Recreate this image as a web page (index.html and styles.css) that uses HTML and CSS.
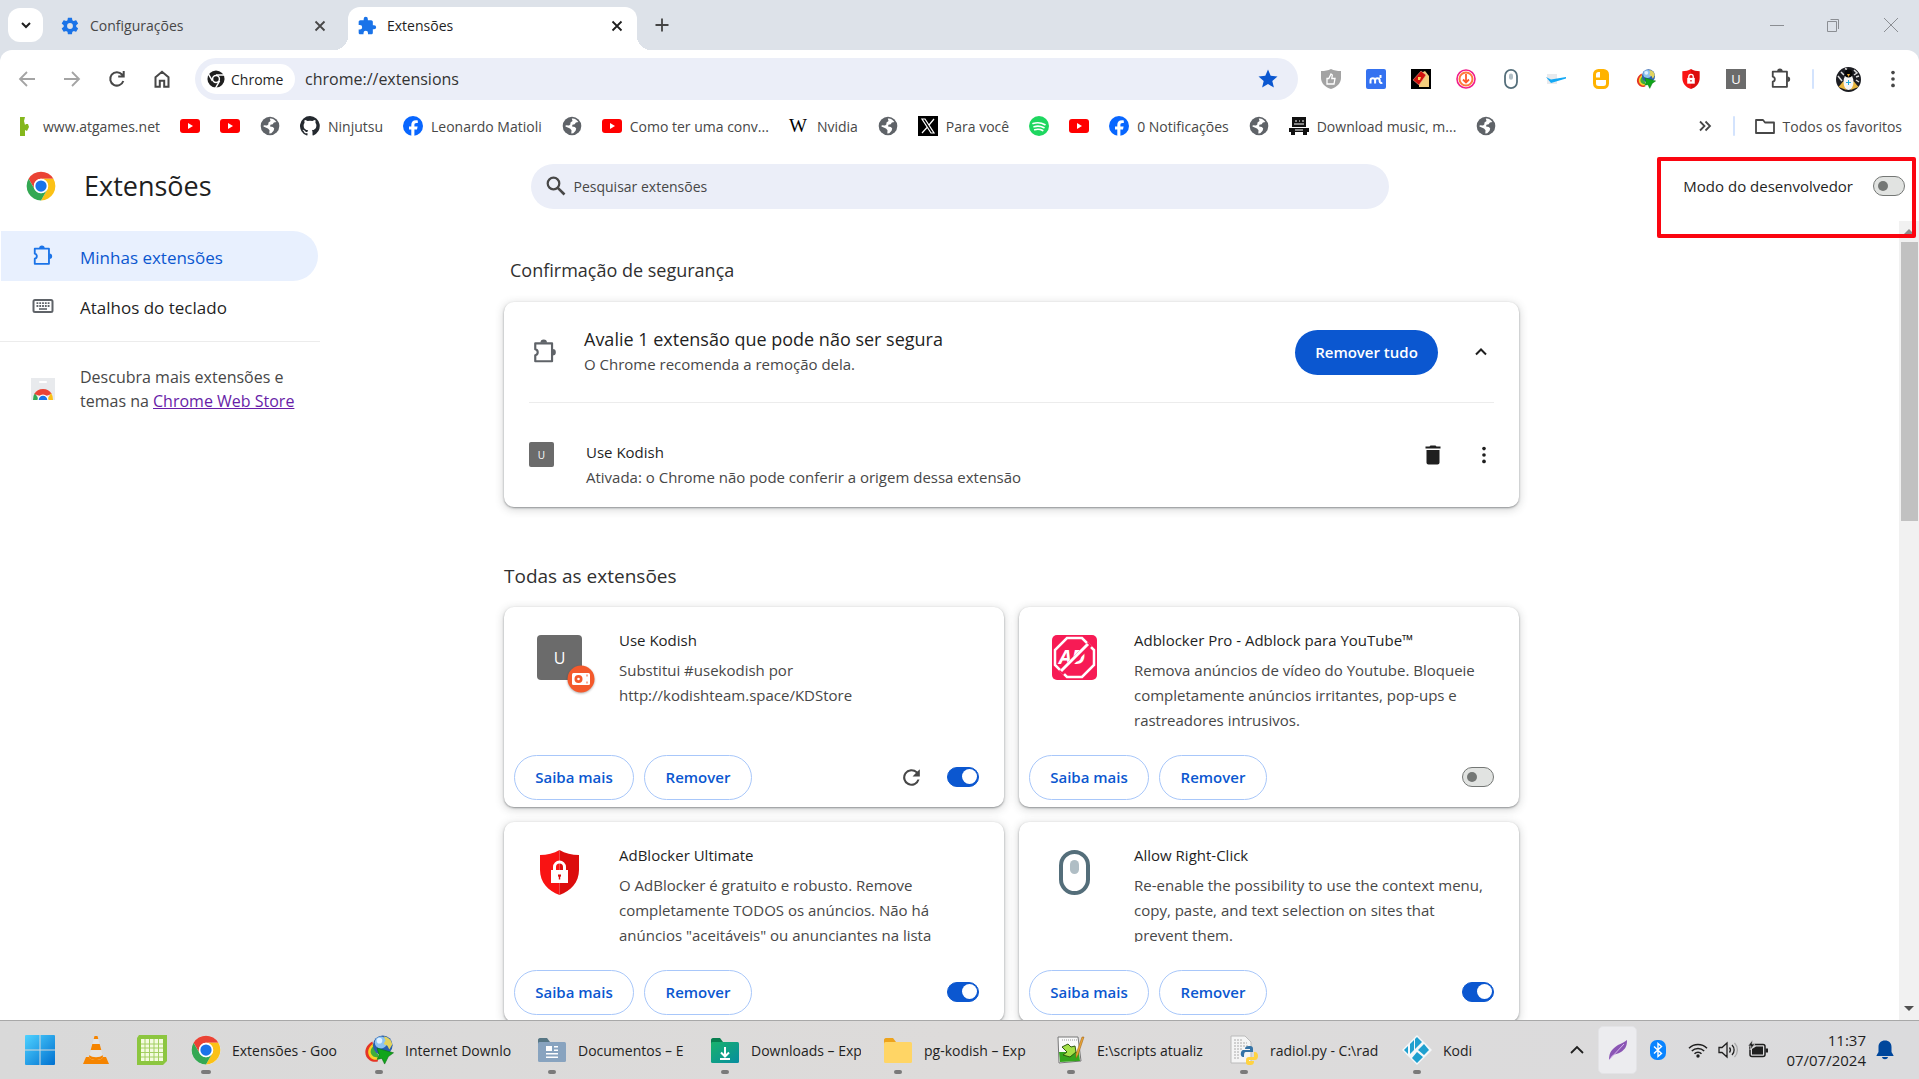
FILE: index.html
```html
<!DOCTYPE html>
<html lang="pt-BR">
<head>
<meta charset="utf-8">
<meta name="viewport" content="width=device-width, initial-scale=1">
<title>Extensões</title>
<link rel="stylesheet" href="styles.css">
</head>
<body>
<svg class="sprite" aria-hidden="true">
  <symbol id="close" viewBox="0 0 16 16"><path d="M3.500 3.500l9 9M12.500 3.500l-9 9" fill="none" stroke="currentColor" stroke-width="1.800"/></symbol>
  <symbol id="puzzle" viewBox="0 0 24 24"><path fill="currentColor" d="M20.500 11H19V7c0-1.100-.9-2-2-2h-4V3.500a2.500 2.500 0 0 0-5 0V5H4c-1.100 0-2 .9-2 2v3.800h1.500a2.700 2.700 0 0 1 0 5.400H2V20c0 1.100.9 2 2 2h3.800v-1.500a2.700 2.700 0 0 1 5.400 0V22H17c1.100 0 2-.9 2-2v-4h1.500a2.500 2.500 0 0 0 0-5z"/></symbol>
  <symbol id="puzzle-line" viewBox="0 0 24 24"><path d="M3 4h15.500v16.500H3v-5.500a2.800 2.800 0 0 0 0-5.500z" fill="none" stroke="currentColor" stroke-width="2" stroke-linejoin="round"/><path fill="currentColor" d="M7.800 3.500a3 3 0 0 1 6 0zM19 9.200a3 3 0 0 1 0 6z"/></symbol>
  <symbol id="globe" viewBox="0 0 20 20"><circle cx="10" cy="10" r="9.300" fill="#5f6368"/><path fill="#fff" d="M9.800 2.600c2.700-.4 5.200 1.200 6.600 3.500l-2.500.5-1.200 1.700-2.300.4-.3 1.800 2.800.4 1.300 1.500-.6 2.300-2.300 2.600-2 .2.200-3.300-1.500-1.700-4.600-2 .4-1.300 3.200.2 1.300-1 .2-2 2-1.400z"/></symbol>
  <symbol id="youtube" viewBox="0 0 20 20"><rect y="3" width="20" height="14" rx="3" fill="#f00"/><path d="M8 7v6l5-3z" fill="#fff"/></symbol>
  <symbol id="facebook" viewBox="0 0 20 20"><circle cx="10" cy="10" r="10" fill="#0866ff"/><path fill="#fff" d="M8.300 20v-6.500H6v-3h2.300V9c0-3.300 1.500-4.800 4.700-4.800.6 0 1.300.1 1.800.2v2.700c-.4 0-.8-.1-1.300-.1-1.600 0-2.100.7-2.100 2v1.500h3.200l-.6 3h-2.600V20z"/></symbol>
  <symbol id="chrome" viewBox="0 0 48 48"><circle cx="24" cy="24" r="23" fill="#fff"/><path fill="#ea4335" d="M4.100 12.500A23 23 0 0 1 43.900 12.500H24a11.500 11.500 0 0 0-10 17.200z"/><path fill="#fbc116" d="M43.900 12.500A23 23 0 0 1 24 47l10-17.300a11.500 11.500 0 0 0-10-17.200z"/><path fill="#34a853" d="M24 47A23 23 0 0 1 4.100 12.500l9.900 17.200a11.500 11.500 0 0 0 20 0z"/><circle cx="24" cy="24" r="11.500" fill="#fff"/><circle cx="24" cy="24" r="9" fill="#1a73e8"/></symbol>
  <symbol id="refresh" viewBox="0 0 24 24"><path fill="currentColor" d="M17.650 6.350A8 8 0 1 0 19.730 14h-2.080A6 6 0 1 1 12 6c1.660 0 3.140.69 4.220 1.780L13 11h7V4z"/></symbol>
  <symbol id="dots" viewBox="0 0 24 24"><g fill="currentColor"><circle cx="12" cy="5" r="2"/><circle cx="12" cy="12" r="2"/><circle cx="12" cy="19" r="2"/></g></symbol>
  <symbol id="shield" viewBox="0 0 45 45"><path fill="#f91313" d="M22.500 0C17 3.500 10 5 3 5v15c0 12 8 21 19.500 25z"/><path fill="#dc0d0d" d="M22.500 0C28 3.500 35 5 42 5v15c0 12-8 21-19.500 25z"/><path fill="#fff" d="M14 20h17v13H14z"/><path d="M17.500 20v-3a5 5 0 0 1 10 0v3" fill="none" stroke="#fff" stroke-width="3"/><path fill="#dc0d0d" d="M21 24.500h3v1.800l-.8.700v2.500h-1.400V27l-.8-.7z"/></symbol>
  <symbol id="mouse" viewBox="0 0 45 45"><rect x="9" y="2" width="27" height="41" rx="13.500" fill="#fff" stroke="#546e7a" stroke-width="4"/><rect x="18" y="10" width="9" height="14" rx="4.500" fill="#b0bec5"/></symbol>
  <symbol id="idm" viewBox="0 0 32 32"><path fill="#e53525" d="M9 7C0 12-1 22 6 27c3 2 7 2 9 1l-1-4C8 24 6 17 10 12z"/><path fill="#f5d327" d="M10 9C3 14 3 21 8 25c2 1.500 5 1.500 7 1l-1-4c-4-1-5-5-2-9z"/><path fill="#3fae3a" d="M11 11c-5 4-5 9-1 12 2 1 4 1 5 .5L15 20c-3-1-3-4-1-7z"/><circle cx="20" cy="11" r="10.500" fill="#2a5fae"/><circle cx="18" cy="8" r="6.500" fill="#8dc3f0"/><circle cx="16.500" cy="6" r="3" fill="#dff0ff"/><path fill="#e2d35d" d="M21 1.500c5 .5 9 4 9 9l-3 5-2-4-4-2 2-4z"/><path fill="#10a51a" stroke="#0a6c12" stroke-width=".6" d="M14 14l17.500 5-5.500 4-4 8-3-6-5 1 2-5z"/></symbol>
</svg>

<header class="browser">
  <div class="tabstrip">
    <button class="tab-search" aria-label="Pesquisar guias"><svg width="12" height="12" viewBox="0 0 12 12"><path d="M2 4l4 4 4-4" fill="none" stroke="#1f1f1f" stroke-width="2"/></svg></button>
    <div class="tab">
      <svg class="i20 blue" viewBox="0 0 24 24"><path fill="currentColor" fill-rule="evenodd" d="M19.400 13l.1-1-.1-1 2.100-1.600c.2-.2.200-.4.100-.6l-2-3.500c-.1-.2-.4-.3-.6-.2l-2.500 1c-.5-.4-1.100-.7-1.700-1L14.400 2.500c0-.3-.2-.5-.5-.5h-4c-.2 0-.4.2-.5.500L9 5.100c-.6.300-1.200.6-1.700 1l-2.500-1c-.2-.1-.5 0-.6.200l-2 3.500c-.1.200-.1.500.1.600L4.500 11l-.1 1 .1 1-2.200 1.600c-.2.200-.2.400-.1.600l2 3.500c.1.200.4.300.6.200l2.500-1c.5.400 1.100.7 1.700 1l.4 2.600c.1.300.3.500.5.500h4c.3 0 .5-.2.500-.5l.4-2.600c.6-.3 1.200-.6 1.700-1l2.500 1c.2.100.5 0 .6-.2l2-3.500c.1-.2.100-.5-.1-.6zM12 15.500a3.500 3.500 0 1 1 0-7 3.500 3.500 0 0 1 0 7z"/></svg>
      <span class="tab-title">Configurações</span>
      <button class="icon-btn" aria-label="Fechar Configurações"><svg class="i16"><use href="#close"/></svg></button>
    </div>
    <div class="tab active">
      <svg class="i20 blue"><use href="#puzzle"/></svg>
      <span class="tab-title">Extensões</span>
      <button class="icon-btn" aria-label="Fechar Extensões"><svg class="i16"><use href="#close"/></svg></button>
    </div>
    <button class="icon-btn new-tab" aria-label="Nova guia"><svg class="i16" viewBox="0 0 16 16"><path d="M8 1.500v13M1.500 8h13" stroke="#444" stroke-width="1.800"/></svg></button>
    <div class="window-controls">
      <button class="icon-btn" aria-label="Minimizar"><svg class="i16" viewBox="0 0 16 16"><path d="M1 8.500h14" stroke="currentColor"/></svg></button>
      <button class="icon-btn" aria-label="Restaurar"><svg class="i16" viewBox="0 0 16 16"><path d="M1.500 4.500h9v10h-9zM4.500 2.500h8v9.500" fill="none" stroke="currentColor"/></svg></button>
      <button class="icon-btn" aria-label="Fechar"><svg class="i16" viewBox="0 0 16 16"><path d="M1 1l14 14M15 1L1 15" stroke="currentColor"/></svg></button>
    </div>
  </div>

  <div class="toolbar">
    <div class="nav-buttons">
      <button class="icon-btn dim" aria-label="Voltar"><svg class="i20" viewBox="0 0 20 20"><path d="M18 10H3M10 3l-7 7 7 7" fill="none" stroke="currentColor" stroke-width="1.800"/></svg></button>
      <button class="icon-btn dim" aria-label="Avançar"><svg class="i20" viewBox="0 0 20 20"><path d="M2 10h15M10 3l7 7-7 7" fill="none" stroke="currentColor" stroke-width="1.800"/></svg></button>
      <button class="icon-btn" aria-label="Recarregar"><svg class="i20" viewBox="0 0 20 20"><path d="M16.300 12A6.700 6.700 0 1 1 15 5.500l1.500 1.700M16.700 2v5.500h-5.500" fill="none" stroke="currentColor" stroke-width="2"/></svg></button>
      <button class="icon-btn" aria-label="Página inicial"><svg class="i20" viewBox="0 0 20 20"><path d="M3.500 8.200L10 2.800l6.500 5.400v9.600h-4.300v-6H7.800v6H3.500z" fill="none" stroke="currentColor" stroke-width="2"/></svg></button>
    </div>
    <div class="omnibox">
      <span class="chip"><svg class="i18" viewBox="0 0 20 20"><circle cx="10" cy="10" r="9.500" fill="#1f1f1f"/><g stroke="#fff" stroke-width="1.600"><path d="M10 5.500h9M6 12L1.500 4.300M14 12.200L9.500 20"/></g><circle cx="10" cy="10" r="4.600" fill="#fff"/><circle cx="10" cy="10" r="3" fill="#1f1f1f"/></svg>Chrome</span>
      <input class="url" type="text" value="chrome://extensions" aria-label="Barra de endereço">
      <button class="icon-btn" aria-label="Favorito"><svg class="i20" viewBox="0 0 20 20"><path fill="#0b57d0" d="M10 .5l2.700 6.300 6.800.6-5.200 4.500 1.600 6.700L10 15l-5.900 3.600 1.600-6.700L.5 7.400l6.800-.6z"/></svg></button>
    </div>
    <div class="ext-icons">
      <svg class="i20" viewBox="0 0 20 20"><path fill="#a3a3a3" d="M10 0c3 1.500 6 2 10 2v7c0 5-4 9-10 11C4 18 0 14 0 9V2c4 0 7-.5 10-2z"/><path fill="none" stroke="#fff" stroke-width="1.300" d="M6 15V9.500h1.800L10 5l1.300 1-.5 3.500H14l-1 5.500z"/></svg>
      <svg class="i20" viewBox="0 0 20 20"><rect width="20" height="20" rx="2" fill="#3572f0"/><path d="M4.500 14.500v-3a2.300 2.300 0 0 1 4.600 0v3M9.100 11.500a2.300 2.300 0 0 1 4.600 0v1a1.500 1.500 0 0 0 2.500 1M14.500 6v3" fill="none" stroke="#fff" stroke-width="2"/></svg>
      <svg class="i20" viewBox="0 0 20 20"><path d="M0 0h20v20H0z"/><path fill="#f3cd7d" d="M8 5l6-3 4 5v11H8z"/><path fill="#d2110c" stroke="#f4b4a0" stroke-width=".5" d="M10 2l5 4-7 10-6-5z"/><path fill="#ffd35a" d="M7 8h3l-1 3H7z"/></svg>
      <svg class="i20" viewBox="0 0 20 20"><circle cx="10" cy="10" r="9" fill="none" stroke="#f11f8c" stroke-width="1.600"/><circle cx="10" cy="10" r="6.500" fill="none" stroke="#ff7a3c" stroke-width="2"/><path d="M10 5v8M7 10.500l3 3 3-3" fill="none" stroke="#ff5a2c" stroke-width="1.800"/></svg>
      <svg class="i20"><use href="#mouse"/></svg>
      <svg class="i20" viewBox="0 0 20 20"><path fill="#e8eaed" d="M1 5h10v10H1z"/><path fill="#14a9f5" d="M0 8l5 2.500L20 8v1.500L5 14z"/></svg>
      <svg class="i20" viewBox="0 0 20 20"><rect x="3.500" y="1.500" width="13" height="17" rx="4" fill="#fff" stroke="#ffb300" stroke-width="3"/><path fill="#ffb300" d="M9 2h7v8h-7zM3 8.500h14V11H3z"/></svg>
      <svg class="i20"><use href="#idm"/></svg>
      <svg class="i20"><use href="#shield"/></svg>
      <span class="letter-icon">U</span>
      <button class="icon-btn" aria-label="Extensões"><svg class="i22"><use href="#puzzle-line"/></svg></button>
      <span class="divider"></span>
      <svg class="i25" viewBox="0 0 25 25"><circle cx="12.500" cy="12.500" r="12.500" fill="#1c1d22"/><path d="M2 9l4 5M5 5l3 3M18 3l3 3-3 2M20 10l3-1M9 1.500l2 1M20 13l3 2" stroke="#ddd" stroke-width="1.500" fill="none"/><path fill="#e7b53c" d="M2.500 20l5-6 3 9zM22.500 20l-5-6-3 9z"/><ellipse cx="12.500" cy="15" rx="5" ry="8" fill="#f6f6f6"/><circle cx="12.500" cy="6.500" r="4" fill="#060606"/><path fill="#f2a92b" d="M11 7h3l-1.500 3z"/><path d="M12.500 13v5M10 15.500h5" stroke="#2bb0dd"/></svg>
      <button class="icon-btn" aria-label="Menu"><svg class="i22"><use href="#dots"/></svg></button>
    </div>
  </div>

  <nav class="bookmarks" aria-label="Favoritos">
    <a href="#"><svg class="i20" viewBox="0 0 20 20"><path fill="#84b71c" d="M5 1h5l-1 4 1 4 1-1h2l1 3-2 4-2-1v6H5z"/></svg>www.atgames.net</a>
    <a href="#" aria-label="YouTube"><svg class="i20"><use href="#youtube"/></svg></a>
    <a href="#" aria-label="YouTube"><svg class="i20"><use href="#youtube"/></svg></a>
    <a href="#" aria-label="Site"><svg class="i20"><use href="#globe"/></svg></a>
    <a href="#"><svg class="i20" viewBox="0 0 16 16"><path fill="#24292f" d="M8 0a8 8 0 0 0-2.500 15.600c.4.100.5-.2.500-.4v-1.500c-2.200.5-2.700-1-2.700-1-.4-.9-.9-1.200-.9-1.200-.7-.5.100-.5.100-.5.800.1 1.200.8 1.200.8.700 1.300 1.900.9 2.300.7.100-.5.300-.9.500-1.100-1.800-.2-3.600-.9-3.600-4 0-.9.300-1.600.8-2.100-.1-.2-.4-1 .1-2.100 0 0 .7-.2 2.200.8a7.600 7.600 0 0 1 4 0c1.500-1 2.200-.8 2.200-.8.400 1.100.2 1.900.1 2.100.5.600.8 1.300.8 2.100 0 3.100-1.900 3.800-3.600 4 .3.200.5.700.5 1.500v2.200c0 .2.100.5.600.4A8 8 0 0 0 8 0z"/></svg>Ninjutsu</a>
    <a href="#"><svg class="i20"><use href="#facebook"/></svg>Leonardo Matioli</a>
    <a href="#" aria-label="Site"><svg class="i20"><use href="#globe"/></svg></a>
    <a href="#"><svg class="i20"><use href="#youtube"/></svg>Como ter uma conv...</a>
    <a href="#"><span class="wiki">W</span>Nvidia</a>
    <a href="#" aria-label="Site"><svg class="i20"><use href="#globe"/></svg></a>
    <a href="#"><svg class="i20" viewBox="0 0 20 20"><path d="M0 0h20v20H0z"/><path d="M4 3h3l9 14h-3zM16 3L11 9M9 11.500L4 17" fill="none" stroke="#fff" stroke-width="1.200"/></svg>Para você</a>
    <a href="#" aria-label="Spotify"><svg class="i20" viewBox="0 0 20 20"><circle cx="10" cy="10" r="10" fill="#1ed760"/><path d="M4 7.500c4-1.200 8.500-.8 12 1.200M5 10.700c3.500-1 7-.6 10 1M5.700 13.700c2.800-.8 5.700-.5 8 .9" fill="none" stroke="#fff" stroke-width="1.700" stroke-linecap="round"/></svg></a>
    <a href="#" aria-label="YouTube"><svg class="i20"><use href="#youtube"/></svg></a>
    <a href="#"><svg class="i20"><use href="#facebook"/></svg>0 Notificações</a>
    <a href="#" aria-label="Site"><svg class="i20"><use href="#globe"/></svg></a>
    <a href="#"><svg class="i20" viewBox="0 0 20 20"><path d="M3 1h14v10H3zM0 12h20v4H0zM2 16h4v3H2zM14 16h4v3h-4z" fill="#111"/><path d="M6 5h2M10 5h1M13 5h2M5 8h10M6 14h8" stroke="#fff"/></svg>Download music, m...</a>
    <a href="#" aria-label="Site"><svg class="i20"><use href="#globe"/></svg></a>
    <span class="spacer"></span>
    <button class="icon-btn" aria-label="Mais favoritos"><svg class="i16" viewBox="0 0 16 16"><path d="M3 3.500L7.500 8 3 12.500M8.500 3.500L13 8l-4.500 4.500" fill="none" stroke="currentColor" stroke-width="1.800"/></svg></button>
    <span class="divider"></span>
    <a class="all" href="#"><svg class="i20" viewBox="0 0 20 20"><path d="M1 4h7l2 2.500h9V17H1z" fill="none" stroke="#474747" stroke-width="1.800" stroke-linejoin="round"/></svg>Todos os favoritos</a>
  </nav>
</header>

<div class="page">
  <header class="page-header">
    <div class="brand"><svg class="i30"><use href="#chrome"/></svg><h1>Extensões</h1></div>
    <label class="search">
      <svg class="i20" viewBox="0 0 20 20"><circle cx="7.500" cy="7.500" r="5.800" fill="none" stroke="#474747" stroke-width="2.200"/><path d="M11.800 11.800l6.700 6.700" stroke="#474747" stroke-width="2.600"/></svg>
      <input type="text" placeholder="Pesquisar extensões" aria-label="Pesquisar extensões">
    </label>
    <div class="dev-mode">
      <label for="dev">Modo do desenvolvedor</label>
      <input class="toggle" type="checkbox" role="switch" id="dev">
    </div>
    <div class="highlight"></div>
  </header>

  <div class="columns">
    <nav class="sidebar" aria-label="Extensões">
      <a class="nav-item selected" href="#"><svg class="i22"><use href="#puzzle-line"/></svg><span>Minhas extensões</span></a>
      <a class="nav-item" href="#"><svg class="i22" viewBox="0 0 22 22"><rect x="1.500" y="5" width="19" height="12" rx="1.500" fill="none" stroke="#5f6368" stroke-width="2"/><path d="M4.500 8.200h13M4.500 11h13" stroke="#5f6368" stroke-width="1.800" stroke-dasharray="1.800 1"/><path d="M7 14h8" stroke="#5f6368" stroke-width="1.600"/></svg><span>Atalhos do teclado</span></a>
      <div class="promo">
        <svg class="i24" viewBox="0 0 24 24"><path fill="#e8eaed" d="M0 1h24v22H0z"/><rect x="8" y="4" width="8" height="2" rx="1" fill="#fff"/><path fill="#34a853" d="M2 23a10 10 0 0 1 2-7l4 7z"/><path fill="#ea4335" d="M3.300 17a10 10 0 0 1 17.400 0L12 20z"/><path fill="#fbc116" d="M20 16a10 10 0 0 1 2 7h-6z"/><path fill="#fff" d="M6.500 23a5.500 5.500 0 0 1 11 0z"/><path fill="#1a73e8" d="M7.700 23a4.300 4.300 0 0 1 8.600 0z"/></svg>
        <p>Descubra mais extensões e temas na <a href="#">Chrome Web Store</a></p>
      </div>
    </nav>

    <main class="content">
      <h2 class="inset">Confirmação de segurança</h2>
      <section class="card review">
        <div class="review-head">
          <svg class="i26 grey"><use href="#puzzle-line"/></svg>
          <div class="review-text"><h3>Avalie 1 extensão que pode não ser segura</h3><p>O Chrome recomenda a remoção dela.</p></div>
          <button class="primary">Remover tudo</button>
          <button class="icon-btn" aria-label="Recolher"><svg class="i16" viewBox="0 0 16 16"><path d="M3 10.500L8 5.500l5 5" fill="none" stroke="currentColor" stroke-width="2"/></svg></button>
        </div>
        <div class="review-row">
          <span class="letter-icon small">U</span>
          <div class="review-text"><h4>Use Kodish</h4><p>Ativada: o Chrome não pode conferir a origem dessa extensão</p></div>
          <button class="icon-btn" aria-label="Remover Use Kodish"><svg class="i24" viewBox="0 0 24 24"><path fill="currentColor" d="M5.500 7h13v12.500c0 1-.8 2-2 2h-9c-1.200 0-2-1-2-2zM4.500 3.500H8.500l1-1h5l1 1h4v2h-15z"/></svg></button>
          <button class="icon-btn" aria-label="Mais ações"><svg class="i22"><use href="#dots"/></svg></button>
        </div>
      </section>

      <h2 class="all-title">Todas as extensões</h2>
      <div class="grid">
        <article class="card ext">
          <div class="ext-body">
            <div class="ext-icon"><span class="letter-icon big">U</span>
              <svg class="badge" viewBox="0 0 28 28"><circle cx="14" cy="14" r="13.500" fill="#f4592b"/><rect x="5" y="8" width="18" height="12" rx="1.500" fill="#fff"/><circle cx="11.500" cy="14" r="4" fill="#f4592b"/><circle cx="11.500" cy="14" r="1.300" fill="#fff"/><path d="M20 9.500v2M20 16.500v2" stroke="#f4592b"/></svg></div>
            <div class="ext-text"><h3>Use Kodish</h3><p>Substitui #usekodish por<br>http://kodishteam.space/KDStore</p></div>
          </div>
          <div class="actions">
            <button class="outline more">Saiba mais</button><button class="outline">Remover</button>
            <span class="spacer"></span>
            <button class="icon-btn" aria-label="Recarregar Use Kodish"><svg class="i25 dark"><use href="#refresh"/></svg></button>
            <input class="toggle" type="checkbox" role="switch" aria-label="Ativar Use Kodish" checked>
          </div>
        </article>
        <article class="card ext">
          <div class="ext-body">
            <div class="ext-icon"><svg viewBox="0 0 45 45"><rect width="45" height="45" rx="5" fill="#f71b55"/><path d="M15 3h15l12 12v15L30 42H15L3 30V15z" fill="none" stroke="#fff" stroke-width="2.500"/><text x="7" y="29" class="ad-text">AD</text><path d="M9 38L38 9" stroke="#f71b55" stroke-width="6"/><path d="M9 36L36 9" stroke="#fff" stroke-width="3"/></svg></div>
            <div class="ext-text"><h3>Adblocker Pro - Adblock para YouTube™</h3><p>Remova anúncios de vídeo do Youtube. Bloqueie<br>completamente anúncios irritantes, pop-ups e<br>rastreadores intrusivos.</p></div>
          </div>
          <div class="actions">
            <button class="outline more">Saiba mais</button><button class="outline">Remover</button>
            <span class="spacer"></span>
            <input class="toggle" type="checkbox" role="switch" aria-label="Ativar Adblocker Pro">
          </div>
        </article>
        <article class="card ext">
          <div class="ext-body">
            <div class="ext-icon"><svg><use href="#shield"/></svg></div>
            <div class="ext-text"><h3>AdBlocker Ultimate</h3><p>O AdBlocker é gratuito e robusto. Remove<br>completamente TODOS os anúncios. Não há<br>anúncios "aceitáveis" ou anunciantes na lista</p></div>
          </div>
          <div class="actions">
            <button class="outline more">Saiba mais</button><button class="outline">Remover</button>
            <span class="spacer"></span>
            <input class="toggle" type="checkbox" role="switch" aria-label="Ativar AdBlocker Ultimate" checked>
          </div>
        </article>
        <article class="card ext">
          <div class="ext-body">
            <div class="ext-icon"><svg><use href="#mouse"/></svg></div>
            <div class="ext-text"><h3>Allow Right-Click</h3><p>Re-enable the possibility to use the context menu,<br>copy, paste, and text selection on sites that<br>prevent them.</p></div>
          </div>
          <div class="actions">
            <button class="outline more">Saiba mais</button><button class="outline">Remover</button>
            <span class="spacer"></span>
            <input class="toggle" type="checkbox" role="switch" aria-label="Ativar Allow Right-Click" checked>
          </div>
        </article>
      </div>
    </main>

    <div class="scrollbar" aria-hidden="true">
      <svg viewBox="0 0 20 20"><path d="M5 13l5-5 5 5z" fill="#8c8c8c"/></svg>
      <div class="thumb"></div>
      <svg viewBox="0 0 20 20"><path d="M5 6l5 5 5-5z" fill="#505050"/></svg>
    </div>
  </div>
</div>

<footer class="taskbar">
  <button class="task pin" aria-label="Iniciar"><svg class="i30" viewBox="0 0 30 30"><defs><linearGradient id="win" x2="1" y2="1"><stop stop-color="#4fd2ff"/><stop offset="1" stop-color="#0070d0"/></linearGradient></defs><path fill="url(#win)" d="M0 1a1 1 0 0 1 1-1h13.500v14.500H0zM15.500 0H29a1 1 0 0 1 1 1v13.500H15.500zM0 15.500h14.500V30H1a1 1 0 0 1-1-1zM15.500 15.500H30V29a1 1 0 0 1-1 1H15.500z"/></svg></button>
  <button class="task pin" aria-label="VLC"><svg class="i30" viewBox="0 0 30 30"><path fill="#f58400" d="M5 22h20l3 7H2z"/><path fill="#e3e3e3" d="M13.500 1h3L22 22c-1 4-13 4-14 0z"/><path fill="#f58400" d="M12.700 4h4.600l-.8-3h-3zM11.300 9h7.400l1.600 6H9.700zM8.500 20l-.5 2c1 4 13 4 14 0l-.5-2c-2 3-11 3-13 0z"/></svg></button>
  <button class="task pin" aria-label="Planilha"><svg class="i30" viewBox="0 0 30 30"><path fill="#8cc63f" d="M0 3l2-3h28v26l-4 4H0z"/><path fill="#f4fbe0" d="M4 4h22v22H4z"/><path d="M4 9h22M4 13h22M4 17.500h22M4 22h22M8 4v22M12.500 4v22M17 4v22M21.500 4v22" stroke="#a3cf62"/></svg></button>
  <button class="task app current"><svg class="i30"><use href="#chrome"/></svg><span>Extensões - Goo</span></button>
  <button class="task app"><svg class="i30"><use href="#idm"/></svg><span>Internet Downlo</span></button>
  <button class="task app"><svg class="i30" viewBox="0 0 30 30"><path fill="#577684" d="M1 7V5c0-1 .7-2 2-2h7l3 4h-2v3H1z"/><rect x="1" y="7" width="28" height="20" rx="1.500" fill="#88a3bf"/><path fill="#fff" d="M9 11h6v5H9zM17 11h4v1.500h-4zM17 14.500h4V16h-4zM9 18h12v1.500H9zM9 21.500h12V23H9z"/></svg><span>Documentos – E</span></button>
  <button class="task app"><svg class="i30" viewBox="0 0 30 30"><defs><linearGradient id="dl" x2="1" y2="1"><stop stop-color="#18b26c"/><stop offset="1" stop-color="#078d9f"/></linearGradient></defs><path fill="#087f50" d="M1 10V5c0-1 .7-2 2-2h7l3 4v3z"/><rect x="1" y="7" width="28" height="21" rx="1.500" fill="url(#dl)"/><path d="M15 12v9M11 17.500l4 4 4-4M10 24h10" fill="none" stroke="#fff" stroke-width="2"/></svg><span>Downloads – Exp</span></button>
  <button class="task app"><svg class="i30" viewBox="0 0 30 30"><path fill="#eda31c" d="M1 10V5c0-1 .7-2 2-2h7l3 4v3z"/><rect x="1" y="7" width="28" height="21" rx="1.500" fill="#ffd565"/></svg><span>pg-kodish – Exp</span></button>
  <button class="task app"><svg class="i30" viewBox="0 0 30 30"><path fill="#fafafa" stroke="#777" d="M2 2h20l3 24-22 2z"/><path fill="#34a51d" d="M3 17h20l1 9-20 1z"/><path fill="#a3e047" stroke="#305a12" d="M6 12l6-3 3 3 4-1 1 6-6 5-7-2 4-3z"/><path d="M6 5h15" stroke="#999" stroke-dasharray="1 1"/><path d="M28 2l-6 18-2 3v-4l6-17z" fill="#e9a534" stroke="#9b5a13" stroke-width=".5"/></svg><span>E:\scripts atualiz</span></button>
  <button class="task app"><svg class="i30" viewBox="0 0 30 30"><path fill="#f5f5f5" stroke="#bbb" d="M2 1h14l6 6v21H2z"/><path d="M5 5h9M5 8h13M5 11h14M5 14h8M5 17h6M5 20h6M5 23h6" stroke="#aaa" stroke-dasharray="2 1"/><path fill="#3573a6" d="M20 11c4 0 4 1.500 4 3v3h-7c-2 0-2 2-2 5h-1c-3 0-3-6 0-7h7v-1h-5c0-2 1-3 4-3z"/><path fill="#ffd342" d="M21 30c-4 0-4-1.500-4-3v-2c0-2 1-3 3-3h5v-5h1c4 0 4 8 0 8h-6v1h5c0 3-1 4-4 4z"/></svg><span>radiol.py - C:\rad</span></button>
  <button class="task app"><svg class="i30" viewBox="0 0 30 30"><path fill="#f4f8fa" d="M15 0l15 15-15 15L0 15z"/><path fill="#1fa0cf" d="M15 2l5 5-7 7V4zM8 9l4-4v10l-4 4zM22 9l5 6-5 5-6-5zM15 17l6 5-6 6-5-5zM6 11v8l-4-4z"/></svg><span>Kodi</span></button>
  <span class="spacer"></span>
  <div class="tray">
    <button class="icon-btn" aria-label="Mostrar ícones ocultos"><svg class="i16" viewBox="0 0 16 16"><path d="M2 11l6-6 6 6" fill="none" stroke="#1f1f1f" stroke-width="1.800"/></svg></button>
    <button class="feather" aria-label="Pena"><svg class="i22" viewBox="0 0 22 22"><path fill="#8a55b4" d="M2 21c0-8 3-11 9-15 4-2 7-3 9-5 0 7-2 9-6 12-3 2-7 2-9 4z"/><path d="M2 21L17 5" stroke="#d7b8ee"/></svg></button>
    <svg class="i20 bt" viewBox="0 0 20 20"><rect x="2" width="16" height="20" rx="7" fill="#0a84ff"/><path d="M6 6.500l7.500 7L10 16.500v-13l3.500 3L6 13.500" fill="none" stroke="#fff" stroke-width="1.400"/></svg>
    <div class="status">
      <svg class="i20" viewBox="0 0 20 20"><path d="M1 8.200a13 13 0 0 1 18 0M3.800 11a9 9 0 0 1 12.400 0M6.500 13.800a5 5 0 0 1 7 0" fill="none" stroke="#1f1f1f" stroke-width="1.500"/><circle cx="10" cy="16" r="1.700" fill="#1f1f1f"/></svg>
      <svg class="i20" viewBox="0 0 20 20"><path d="M1 7.500h3l5-4.500v14l-5-4.500H1zM11.500 7.500a4 4 0 0 1 0 5M14 5a7 7 0 0 1 0 10" fill="none" stroke="#1f1f1f" stroke-width="1.300"/><path d="M16.500 3a10 10 0 0 1 0 14" fill="none" stroke="#aaa" stroke-width="1.300"/></svg>
      <svg class="i20" viewBox="0 0 20 20"><rect x="2" y="4.500" width="15" height="12" rx="2" fill="none" stroke="#1f1f1f" stroke-width="1.500"/><path fill="#1f1f1f" d="M4 9l4-2.500h7v8H4zM17.500 8.500H20v4h-2.500z"/><path fill="#1f1f1f" stroke="#dcdcdd" stroke-width=".6" d="M4.500 0L0 6h3l-1 4 5-6H4z"/></svg>
    </div>
    <div class="clock"><span>11:37</span><span>07/07/2024</span></div>
    <svg class="i20" viewBox="0 0 20 20"><path fill="#00479c" d="M10 .5c4 0 6.500 2.500 6.500 6.500v5l2 3.500v.5h-17v-.5l2-3.500V7C3.500 3 6 .5 10 .5zM7 17h6c-.5 3-5.500 3-6 0z"/></svg>
  </div>
</footer>
</body>
</html>
```
FILE: styles.css
```css
* { box-sizing: border-box; }

body {
  margin: 0;
  height: 100vh;
  display: flex;
  flex-direction: column;
  overflow: hidden;
  background: #fff;
  color: #1f1f1f;
  font: 15px/25px "Segoe UI", "Open Sans", "Noto Sans", sans-serif;
}

h1, h2, h3, h4, p { margin: 0; font-weight: 400; }
a { color: inherit; text-decoration: none; }
button, input { font: inherit; color: inherit; margin: 0; }
button { padding: 0; border: 0; background: none; }
svg { display: block; flex: none; }
.sprite { position: absolute; width: 0; height: 0; }

.i16 { width: 16px; height: 16px; }
.i18 { width: 18px; height: 18px; }
.i20 { width: 20px; height: 20px; }
.i22 { width: 22px; height: 22px; }
.i24 { width: 24px; height: 24px; }
.i25 { width: 25px; height: 25px; }
.i26 { width: 26px; height: 26px; }
.i30 { width: 30px; height: 30px; }
.blue { color: #1a73e8; }
.grey { color: #5f6368; }
.dark { color: #474747; }
.dim { color: #a4a4a4; }
.spacer { flex: 1; }
.divider { width: 2px; height: 20px; border-radius: 1px; background: #d3e3fd; }

.icon-btn {
  display: flex;
  align-items: center;
  justify-content: center;
  flex: none;
}

/* Browser window */
.browser { flex: none; background: #dde2e9; }

.tabstrip {
  display: flex;
  align-items: flex-end;
  height: 50px;
  padding-left: 8px;
  font-size: 14px;
}
.tab-search {
  display: grid;
  place-items: center;
  width: 35px;
  height: 34px;
  margin-bottom: 8px;
  border-radius: 12px;
  background: #fff;
}
.tab {
  display: flex;
  align-items: center;
  gap: 10px;
  width: 289px;
  height: 43px;
  margin-left: 8px;
  padding: 0 12px 6px 9px;
  color: #474747;
}
.tab-title { flex: 1; }
.tab.active {
  position: relative;
  border-radius: 12px 12px 0 0;
  background: #fff;
  color: #1f1f1f;
}
.tab.active::before,
.tab.active::after {
  content: "";
  position: absolute;
  bottom: 0;
  width: 14px;
  height: 14px;
}
.tab.active::before { right: 100%; background: radial-gradient(circle at 0 0, transparent 14px, #fff 14px); }
.tab.active::after { left: 100%; background: radial-gradient(circle at 100% 0, transparent 14px, #fff 14px); }
.new-tab { height: 34px; margin: 0 0 8px 17px; }
.window-controls {
  display: flex;
  gap: 41px;
  margin: 0 20px 17px auto;
  color: #8b8e93;
}

.toolbar {
  display: flex;
  align-items: center;
  height: 58px;
  padding: 0 16px 0 17px;
  border-radius: 12px 12px 0 0;
  background: #fff;
  color: #474747;
}
.nav-buttons { display: flex; gap: 25px; width: 178px; }
.omnibox {
  display: flex;
  align-items: center;
  flex: 1;
  height: 42px;
  padding: 0 20px 0 6px;
  border-radius: 21px;
  background: #ebeef8;
}
.chip {
  display: flex;
  align-items: center;
  gap: 6px;
  width: 94px;
  height: 30px;
  padding-left: 6px;
  border-radius: 15px;
  background: #fff;
  color: #1f1f1f;
  font-size: 14px;
}
.url {
  flex: 1;
  padding: 0 10px;
  border: 0;
  outline: 0;
  background: none;
  color: #333;
  font-size: 16px;
}
.ext-icons {
  display: flex;
  align-items: center;
  gap: 25px;
  margin-left: 23px;
}
.ext-icons .divider { margin: 0 2px 0 -4px; }
.ext-icons .i22 { margin: 0 -1px; }
.ext-icons .i25 { margin-left: -5px; margin-right: -3px; }
.letter-icon {
  display: grid;
  place-items: center;
  flex: none;
  width: 20px;
  height: 20px;
  background: #6b6b6b;
  color: #fff;
  font-size: 13px;
  line-height: 20px;
}
.letter-icon.small { width: 25px; height: 25px; border-radius: 2px; font-size: 10px; }
.letter-icon.big { width: 45px; height: 45px; border-radius: 4px; font-size: 16px; }

.bookmarks {
  display: flex;
  align-items: center;
  gap: 20px;
  height: 42px;
  padding: 0 17px 6px 15px;
  background: #fff;
  color: #474747;
  font-size: 14px;
  white-space: nowrap;
}
.bookmarks a { display: flex; align-items: center; gap: 8px; }
.wiki {
  width: 20px;
  color: #000;
  font: 400 19px/20px "Liberation Serif", serif;
}

/* Extensions page */
.page {
  flex: 1;
  display: flex;
  flex-direction: column;
  min-height: 0;
}
.page-header {
  position: relative;
  flex: none;
  display: grid;
  grid-template-columns: 1fr 858px 1fr;
  align-items: center;
  height: 71px;
  padding-top: 1px;
}
.brand { display: flex; align-items: center; gap: 28px; padding-left: 26px; }
.brand h1 { font-size: 27px; line-height: 36px; }
.search {
  display: flex;
  align-items: center;
  gap: 8px;
  height: 45px;
  padding: 0 15px;
  border-radius: 23px;
  background: #ebeef8;
}
.search input {
  flex: 1;
  padding: 0;
  border: 0;
  outline: 0;
  background: none;
  font-size: 14px;
}
.search input::placeholder { color: #474747; opacity: 1; }
.dev-mode {
  display: flex;
  align-items: center;
  justify-content: flex-end;
  gap: 20px;
  padding-right: 14px;
}
.highlight {
  position: absolute;
  top: 7px;
  right: 3px;
  z-index: 1;
  width: 259px;
  height: 81px;
  border: 4px solid #fb0510;
  border-radius: 2px;
  pointer-events: none;
}

.toggle {
  appearance: none;
  flex: none;
  display: flex;
  align-items: center;
  width: 32px;
  height: 20px;
  padding: 0 4px;
  border: 1px solid #747775;
  border-radius: 10px;
  background: #e1e3e1;
}
.toggle::before {
  content: "";
  width: 10px;
  height: 10px;
  border-radius: 50%;
  background: #747775;
}
.toggle:checked {
  justify-content: flex-end;
  padding: 0 1px;
  border-color: #0b57d0;
  background: #0b57d0;
}
.toggle:checked::before { width: 15px; height: 15px; background: #fff; }

.columns { flex: 1; display: flex; min-height: 0; }

.sidebar { flex: none; width: 320px; padding-top: 10px; font-size: 17px; }
.nav-item {
  display: flex;
  align-items: center;
  gap: 26px;
  height: 50px;
  margin: 0 2px 0 1px;
  padding-left: 31px;
  border-radius: 0 25px 25px 0;
  font-weight: 500;
}
.nav-item span { padding-top: 2px; }
.nav-item svg { color: #1a73e8; }
.nav-item.selected { background: #e8f0fe; color: #0b57d0; }
.promo {
  display: flex;
  align-items: center;
  gap: 25px;
  margin-top: 10px;
  padding: 23px 20px 0 31px;
  border-top: 1px solid #ececec;
  color: #474747;
  font-size: 16px;
  line-height: 24px;
}
.promo a { color: #681da8; text-decoration: underline; }

.content { flex: none; width: 1015px; margin-left: 184px; }
.content h2 { font-size: 18px; line-height: 30px; color: #303030; }
.content .inset { margin: 34px 0 17px; padding-left: 6px; }
.content .all-title { margin: 54px 0 16px; font-size: 19px; }
.card {
  border-radius: 10px;
  background: #fff;
  box-shadow: 0 1px 2px rgba(60, 64, 67, .5), 0 2px 8px 1px rgba(60, 64, 67, .2);
}
.review { height: 205px; padding: 0 25px; }
.review-head {
  display: flex;
  align-items: center;
  height: 101px;
  padding: 0 5px 0 3px;
  border-bottom: 1px solid #ececec;
}
.review-text { flex: 1; }
.review p { color: #474747; }
.review h3 { font-size: 18px; }
.review-head .review-text { padding-left: 26px; }
.review-head .primary { margin-right: 35px; }
.primary {
  width: 143px;
  height: 45px;
  border-radius: 23px;
  background: #0b57d0;
  color: #fff;
  font-size: 15px;
  font-weight: 600;
}
.review-row { display: flex; padding: 37px 0 0; }
.review-row .letter-icon { margin-top: 2px; }
.review-row .review-text { padding-left: 32px; }
.review-row .icon-btn { height: 30px; margin-left: 28px; }
.review-row .icon-btn:last-child { margin-right: -1px; }

.grid { display: grid; grid-template-columns: 1fr 1fr; gap: 15px; }
.ext { display: flex; flex-direction: column; justify-content: space-between; height: 200px; padding-bottom: 7px; }
.ext-body { display: flex; padding: 21px 20px 0 33px; }
.ext-icon { position: relative; width: 45px; height: 45px; margin: 7px 37px 0 0; }
.ext-icon > svg { width: 45px; height: 45px; }
.ext-icon .badge { position: absolute; left: 30px; top: 30px; width: 28px; height: 28px; filter: drop-shadow(0 1px 1px rgba(0, 0, 0, .3)); }
.ad-text { fill: #fff; font-size: 20px; font-weight: 700; font-style: italic; }
.ext h3 { margin-bottom: 5px; }
.ext h3, .ext p { font-size: 15px; white-space: nowrap; }
.ext p { height: 69px; overflow: hidden; color: #474747; }
.actions { display: flex; align-items: center; gap: 10px; padding: 0 25px 0 10px; }
.actions .toggle { margin: 0 0 2px 13px; }
.outline {
  width: 108px;
  height: 45px;
  border: 1px solid #a8c7fa;
  border-radius: 23px;
  color: #0b57d0;
  font-size: 15px;
  font-weight: 600;
}
.outline.more { width: 120px; }

.scrollbar {
  display: flex;
  flex-direction: column;
  width: 20px;
  margin-left: auto;
  background: #f1f1f1;
}
.scrollbar svg { width: 20px; height: 20px; }
.thumb { width: 17px; height: 279px; margin: 1px 1px auto 2px; background: #c1c1c1; }

/* Taskbar */
.taskbar {
  position: relative;
  flex: none;
  display: flex;
  align-items: center;
  height: 59px;
  padding: 0 24px 0 11px;
  border-top: 1px solid #a8a8a8;
  background: linear-gradient(90deg, #d9d9d9, #dddbda 50%, #dbdbdd);
  font-size: 14px;
}
.task { display: flex; align-items: center; height: 58px; }
.pin { width: 56px; padding-left: 14px; }
.app { position: relative; gap: 11px; width: 173px; padding-left: 12px; }
.app span { width: 110px; overflow: hidden; white-space: nowrap; text-align: left; }
.app::after {
  content: "";
  position: absolute;
  left: 23px;
  bottom: 5px;
  width: 8px;
  height: 4px;
  border-radius: 2px;
  background: #7a7a7a;
}
.app.current::after { left: 22px; width: 10px; }
.tray { display: flex; align-items: center; }
.feather {
  display: grid;
  place-items: center;
  width: 39px;
  height: 48px;
  margin: 0 11px 0 13px;
  border: 1px solid #e3e3e6;
  border-radius: 5px;
  background: #ececef;
}
.status { display: flex; gap: 10px; margin-left: 20px; }
.clock {
  display: flex;
  flex-direction: column;
  width: 98px;
  margin-right: 9px;
  font-size: 15px;
  line-height: 20px;
  text-align: right;
}
```
